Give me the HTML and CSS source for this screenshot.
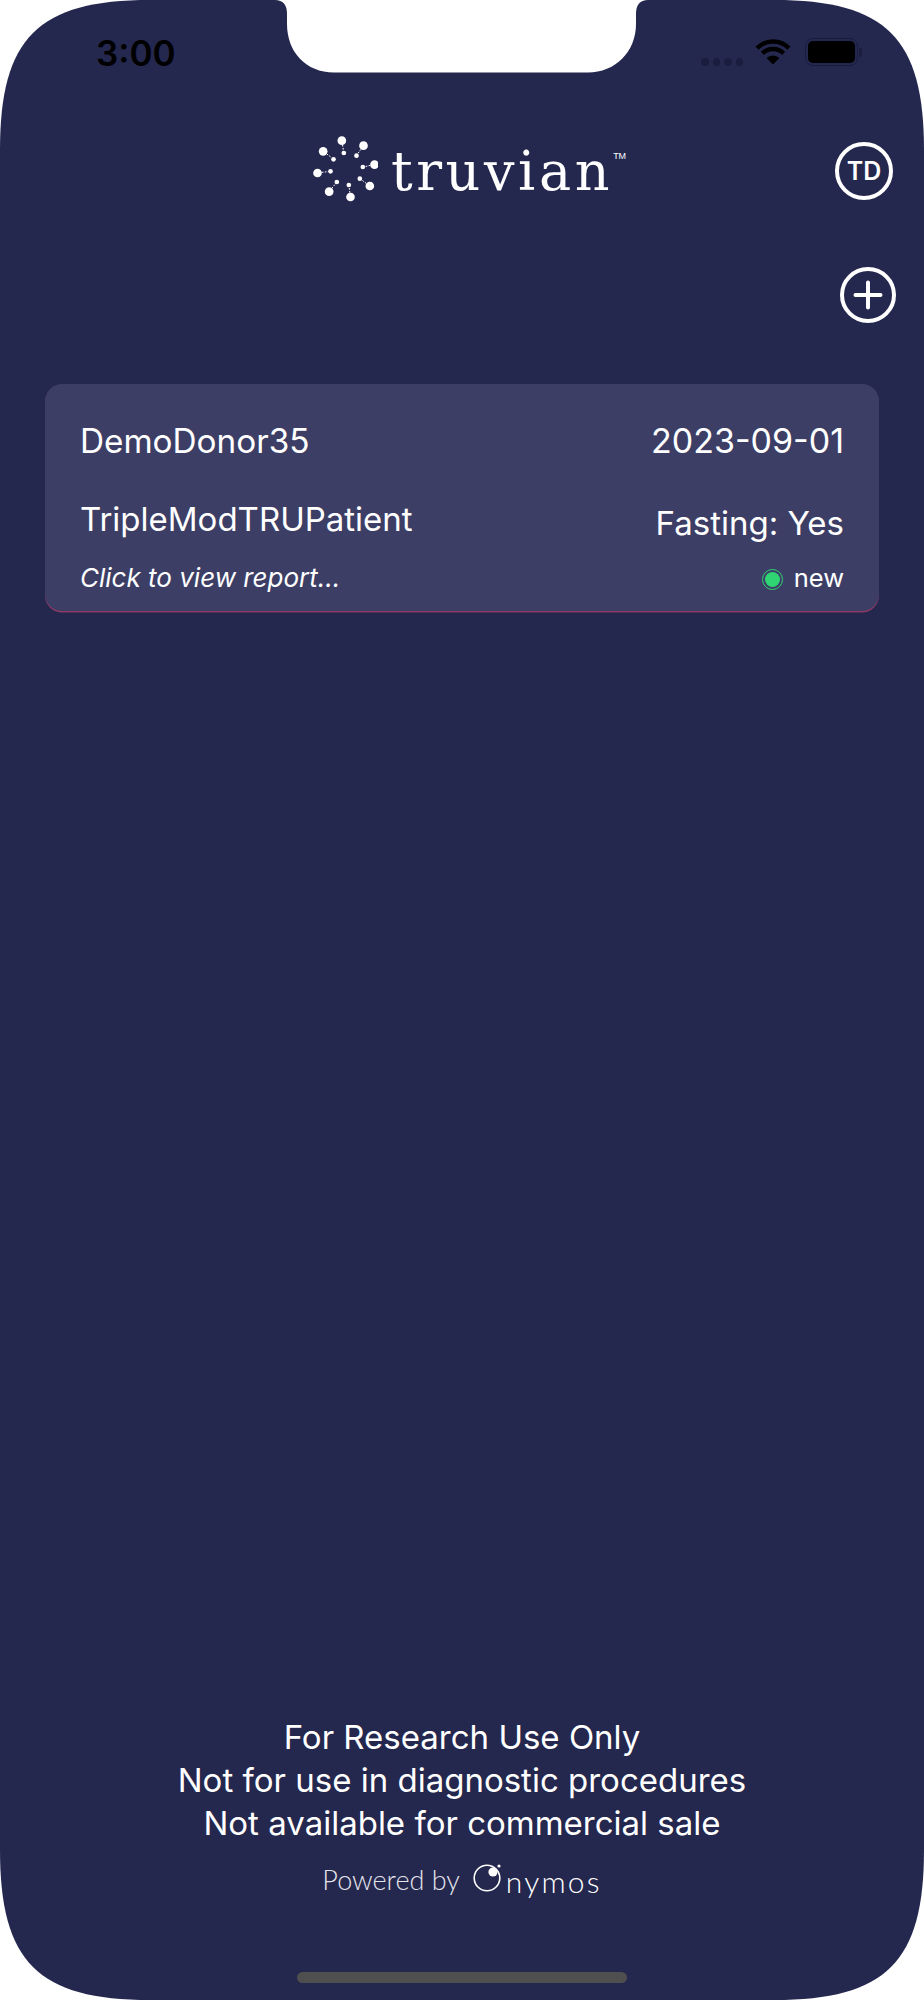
FILE: index.html
```html
<!DOCTYPE html>
<html lang="en">
<head>
    <meta charset="UTF-8">
    <meta name="viewport" content="width=device-width, initial-scale=1.0">
    <title>Truvian</title>
    <link rel="stylesheet" href="styles.css">
</head>
<body>
    <div class="screen">
        <!-- notch sits over the status bar -->
        <svg class="notch" width="380" height="74" viewBox="0 0 380 74">
            <path fill="#fff" d="M0 0H5Q17 0 17 14V24C17 52 36 72.5 64 72.5H318C345 72.5 366 52 366 24V14Q366 0 378 0H380V0Z"/>
        </svg>

        <div class="status-bar">
            <span class="status-time">3:00</span>
            <div class="status-icons">
                <div class="signal-dots">
                    <span class="signal-dot"></span>
                    <span class="signal-dot"></span>
                    <span class="signal-dot"></span>
                    <span class="signal-dot"></span>
                </div>
                <svg class="wifi" width="36" height="27" viewBox="0 0 36 27">
                    <path d="M2.1 10.1A22.5 22.5 0 0 1 33.9 10.1" fill="none" stroke="#000" stroke-width="4.4"/>
                    <path d="M7.4 15.4A15 15 0 0 1 28.6 15.4" fill="none" stroke="#000" stroke-width="4.4"/>
                    <path d="M18 26.5L11.6 20.1A9 9 0 0 1 24.4 20.1Z" fill="#000"/>
                </svg>
                <div class="battery">
                    <div class="battery-body"><span class="battery-level"></span></div>
                    <span class="battery-cap"></span>
                </div>
            </div>
        </div>

        <header class="app-header">
            <span></span>
            <div class="logo">
                <svg class="logo-mark" width="67" height="70" viewBox="60 40 200 210">
                    <g fill="#fff">
                        <circle cx="152" cy="63" r="13"/><circle cx="158" cy="100" r="7"/>
                        <circle cx="217" cy="78" r="13"/><circle cx="196" cy="108" r="7"/>
                        <circle cx="250" cy="135" r="13"/><circle cx="215" cy="142" r="7"/>
                        <circle cx="236" cy="199" r="13"/><circle cx="206" cy="177" r="7"/>
                        <circle cx="178" cy="232" r="13"/><circle cx="173" cy="196" r="7"/>
                        <circle cx="114" cy="216" r="13"/><circle cx="137" cy="187" r="7"/>
                        <circle cx="79" cy="160" r="13"/><circle cx="118" cy="155" r="7"/>
                        <circle cx="96" cy="95" r="13"/><circle cx="127" cy="119" r="7"/>
                    </g>
                    <g stroke="#fff" stroke-width="3" stroke-dasharray="5 4">
                        <path d="M154 76L157 93"/><path d="M209 89L200 102"/>
                        <path d="M237 137L222 141"/><path d="M225 191L212 181"/>
                        <path d="M176 219L174 203"/><path d="M122 206L133 192"/>
                        <path d="M92 158L111 156"/><path d="M107 103L121 114"/>
                    </g>
                </svg>
                <span class="logo-name">truvian</span>
                <span class="logo-tm">TM</span>
            </div>
            <button class="avatar-btn">TD</button>
        </header>

        <div class="add-row">
            <svg class="add-btn" width="56" height="56" viewBox="0 0 56 56">
                <circle cx="28" cy="28" r="26" fill="none" stroke="#fff" stroke-width="4"/>
                <path d="M15.5 28H40.5M28 15.5V40.5" fill="none" stroke="#fff" stroke-width="4" stroke-linecap="round"/>
            </svg>
        </div>

        <div class="report-card">
            <div class="card-row">
                <span class="card-text card-name">DemoDonor35</span>
                <span class="card-text card-date">2023-09-01</span>
            </div>
            <div class="card-row card-row-second">
                <span class="card-text">TripleModTRUPatient</span>
                <span class="card-text card-fasting">Fasting: Yes</span>
            </div>
            <div class="card-row card-row-last">
                <span class="card-hint">Click to view report...</span>
                <span class="card-status"><span class="status-dot"></span>new</span>
            </div>
        </div>

        <footer class="app-footer">
            <div class="footer-note">
                <p>For Research Use Only</p>
                <p>Not for use in diagnostic procedures</p>
                <p>Not available for commercial sale</p>
            </div>
            <div class="powered">
                <span class="powered-by">Powered by</span>
                <svg class="onymos-mark" width="31" height="32" viewBox="0 0 31 32">
                    <circle cx="14" cy="17" r="12.8" fill="none" stroke="#fff" stroke-width="1.6"/>
                    <circle cx="20" cy="11" r="4.6" fill="#fff"/>
                    <circle cx="26" cy="5" r="1.6" fill="#fff"/>
                </svg>
                <span class="onymos-name">nymos</span>
            </div>
            <div class="home-indicator"></div>
        </footer>
    </div>
</body>
</html>
```

FILE: styles.css
```css
/* base */
body {
    margin: 0;
    background-color: #fff;
    font-family: Inter, "Liberation Sans", sans-serif;
    color: #fff;
}

/* phone outline, softer than a plain border-radius */
.screen {
    position: relative;
    display: flex;
    flex-direction: column;
    width: 924px;
    height: 2000px;
    background-color: #24274e;
    clip-path: path("M150 0H774C886 0 924 38 924 150V1850C924 1962 886 2000 774 2000H150C38 2000 0 1962 0 1850V150C0 38 38 0 150 0Z");
}

.notch {
    position: absolute;
    top: 0;
    left: 270px;
}

/* status bar */
.status-bar {
    display: flex;
    justify-content: space-between;
    align-items: center;
    box-sizing: border-box;
    height: 72px;
    padding: 34px 62px 0 96px;
}

.status-time {
    font-size: 35px;
    line-height: 38px;
    font-weight: 600;
    color: #000;
}

.status-icons {
    display: flex;
    align-items: center;
    margin-top: -2px;
}

.signal-dots {
    display: flex;
    gap: 4px;
    margin: 20px 12px 0 0;
}

.signal-dot {
    width: 7.5px;
    height: 7.5px;
    border-radius: 50%;
    background-color: #1a1d3e;
}

.wifi {
    margin-top: -1px;
}

.battery {
    display: flex;
    align-items: center;
    margin-left: 14px;
}

.battery-body {
    box-sizing: border-box;
    width: 53px;
    height: 28px;
    padding: 2px;
    border: 1.5px solid #1a1d3e;
    border-radius: 8px;
}

.battery-level {
    display: block;
    height: 100%;
    background-color: #000;
    border-radius: 5px;
}

.battery-cap {
    width: 3px;
    height: 9px;
    margin-left: 1px;
    background-color: #1a1d3e;
    border-radius: 0 4px 4px 0;
}

/* header */
.app-header {
    display: grid;
    grid-template-columns: 1fr auto 1fr;
    align-items: center;
    padding-top: 66px;
}

.logo {
    position: relative;
    display: flex;
    align-items: center;
}

.logo-mark {
    margin: -5px 13px 0 0;
}

.logo-name {
    margin-top: 3px;
    font-family: "DejaVu Serif", serif;
    font-size: 54px;
    line-height: 58px;
    letter-spacing: 3.6px;
}

.logo-tm {
    position: absolute;
    top: 13px;
    right: -13px;
    font-family: "Liberation Sans", sans-serif;
    font-size: 9px;
}

.avatar-btn {
    justify-self: end;
    box-sizing: border-box;
    width: 58px;
    height: 58px;
    margin-right: 31px;
    padding: 0;
    background: none;
    border: 4px solid #fff;
    border-radius: 50%;
    font-family: Inter, sans-serif;
    font-size: 25px;
    font-weight: 600;
    color: #fff;
}

.add-row {
    display: flex;
    justify-content: flex-end;
    padding: 64px 28px 0 0;
}

.add-btn {
    display: block;
}

/* report card */
.report-card {
    margin: 61px 45px 0;
    padding: 36px 35px 16px;
    background-color: #3c3e66;
    box-shadow: 0 1.5px 0 #8a3a66;
    border-radius: 17px;
}

.card-row {
    display: flex;
    justify-content: space-between;
    align-items: flex-start;
}

.card-row-second {
    margin-top: 36px;
}

.card-row-last {
    align-items: center;
    margin-top: 17px;
}

.card-text {
    font-size: 33px;
    line-height: 42px;
}

.card-name {
    font-size: 33.3px;
}

.card-date {
    font-size: 34px;
}

.card-fasting {
    margin-top: 4px;
}

.card-hint {
    font-size: 26px;
    line-height: 34px;
    font-style: italic;
}

.card-status {
    display: flex;
    align-items: center;
    gap: 11px;
    font-size: 25.5px;
    line-height: 34px;
}

.status-dot {
    box-sizing: border-box;
    width: 21px;
    height: 21px;
    margin-top: 3px;
    background-color: #2fd573;
    background-clip: content-box;
    border: 1px solid #2fd573;
    padding: 2px;
    border-radius: 50%;
}

/* footer */
.app-footer {
    display: flex;
    flex-direction: column;
    align-items: center;
    margin-top: auto;
}

.footer-note {
    text-align: center;
    font-size: 33px;
    line-height: 43px;
}

.footer-note p {
    margin: 0;
}

.powered {
    display: flex;
    align-items: center;
    height: 40px;
    margin-top: 16px;
    font-family: Lato, sans-serif;
    font-weight: 300;
}

.powered-by {
    margin: 0 13px 4px 0;
    font-size: 27px;
    color: #e4e5ec;
}

.onymos-mark {
    margin-top: -9px;
}

.onymos-name {
    margin-left: 2px;
    font-size: 30px;
    letter-spacing: 2.2px;
}

.home-indicator {
    width: 330px;
    height: 11px;
    margin: 71px 0 17px;
    background-color: #4f4f50;
    border-radius: 6px;
}
```
